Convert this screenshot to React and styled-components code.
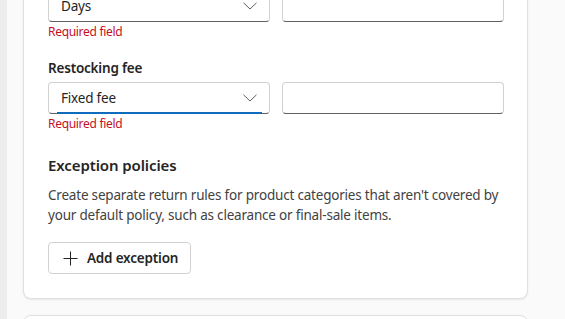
import React from "react";
import styled, { createGlobalStyle } from "styled-components";

const Global = createGlobalStyle`
  html, body { margin: 0; padding: 0; background: #fafafa; }
  body { font-family: "Segoe UI", "Noto Sans", "Open Sans", sans-serif; color: #242424; overflow: hidden; }
`;

const Page = styled.div`
  display: flex;
  min-height: 319px;
`;

const Rail = styled.div`
  width: 7px;
  flex: none;
  background: #ededed;
`;

const Main = styled.main`
  width: 505px;
  margin-left: 16px;
  margin-top: -59px;
  display: flex;
  flex-direction: column;
  gap: 16px;
`;

const Card = styled.section`
  background: #ffffff;
  border: 1px solid #e0e0e0;
  border-radius: 8px;
  box-shadow: 0 1px 2px rgba(0, 0, 0, 0.08);
  padding: 24px;
  display: flex;
  flex-direction: column;
  min-height: ${(p) => p.$minH || 0}px;
`;

const Field = styled.div`
  display: flex;
  flex-direction: column;
  margin-bottom: ${(p) => p.$mb || 0}px;
`;

const Label = styled.label`
  font-size: 13.5px;
  letter-spacing: -0.2px;
  line-height: 20px;
  font-weight: 600;
  color: #242424;
  margin-bottom: 4px;
`;

const Row = styled.div`
  display: grid;
  grid-template-columns: 222px 222px;
  column-gap: 12px;
`;

const SelectBox = styled.div`
  position: relative;
  height: 32px;
  box-sizing: border-box;
  border: 1px solid #d1d1d1;
  border-bottom-color: #616161;
  border-radius: 4px;
  background: #fff;
  display: flex;
  align-items: center;
  padding: 0 12px;
  font-size: 13.5px;
  letter-spacing: -0.2px;
  color: #242424;
  justify-content: space-between;
`;

const FocusLine = styled.span`
  position: absolute;
  left: 8px;
  right: 7px;
  bottom: -1px;
  height: 2px;
  background: #0f6cbd;
`;

const TextBox = styled.div`
  height: 32px;
  box-sizing: border-box;
  border: 1px solid #d1d1d1;
  border-bottom-color: #616161;
  border-radius: 4px;
  background: #fff;
`;

const ErrorText = styled.div`
  font-size: 12px;
  letter-spacing: -0.3px;
  line-height: 16px;
  color: #c50f1f;
  margin-top: 2px;
`;

const Heading = styled.h3`
  margin: 0;
  font-size: 15px;
  letter-spacing: -0.1px;
  line-height: 22px;
  font-weight: 600;
  color: #242424;
`;

const Desc = styled.p`
  margin: 9px 0 17px;
  font-size: 13.5px;
  letter-spacing: -0.2px;
  line-height: 20px;
  color: #424242;
`;

const Button = styled.button`
  align-self: flex-start;
  height: 32px;
  box-sizing: border-box;
  border: 1px solid #d1d1d1;
  border-radius: 4px;
  background: #fff;
  padding: 0 12px 0 14px;
  display: flex;
  align-items: center;
  gap: 9px;
  font-family: inherit;
  font-size: 13.5px;
  letter-spacing: -0.2px;
  font-weight: 600;
  color: #242424;
`;

const Chevron = () => (
  <svg width="14" height="8" viewBox="0 0 14 8" fill="none">
    <path d="M0.5 0.8 L7 7 L13.5 0.8" stroke="#616161" strokeWidth="1" />
  </svg>
);

const Plus = () => (
  <svg width="15" height="15" viewBox="0 0 15 15" fill="none">
    <path d="M7.5 0.5 V14.5 M0.5 7.5 H14.5" stroke="#242424" strokeWidth="1" />
  </svg>
);

function SelectField({ label, value, focused, mb }) {
  return (
    <Field $mb={mb}>
      <Label>{label}</Label>
      <Row>
        <div>
          <SelectBox>
            <span>{value}</span>
            <Chevron />
            {focused && <FocusLine />}
          </SelectBox>
          <ErrorText>Required field</ErrorText>
        </div>
        <TextBox />
      </Row>
    </Field>
  );
}

export default function App() {
  return (
    <>
      <Global />
      <Page>
        <Rail />
        <Main>
          <Card>
            <SelectField label="Return window" value="Days" mb={18} />
            <SelectField label="Restocking fee" value="Fixed fee" focused mb={22} />
            <Heading>Exception policies</Heading>
            <Desc>
              Create separate return rules for product categories that aren't covered by
              your default policy, such as clearance or final-sale items.
            </Desc>
            <Button>
              <Plus />
              Add exception
            </Button>
          </Card>
          <Card $minH={40} />
        </Main>
      </Page>
    </>
  );
}
